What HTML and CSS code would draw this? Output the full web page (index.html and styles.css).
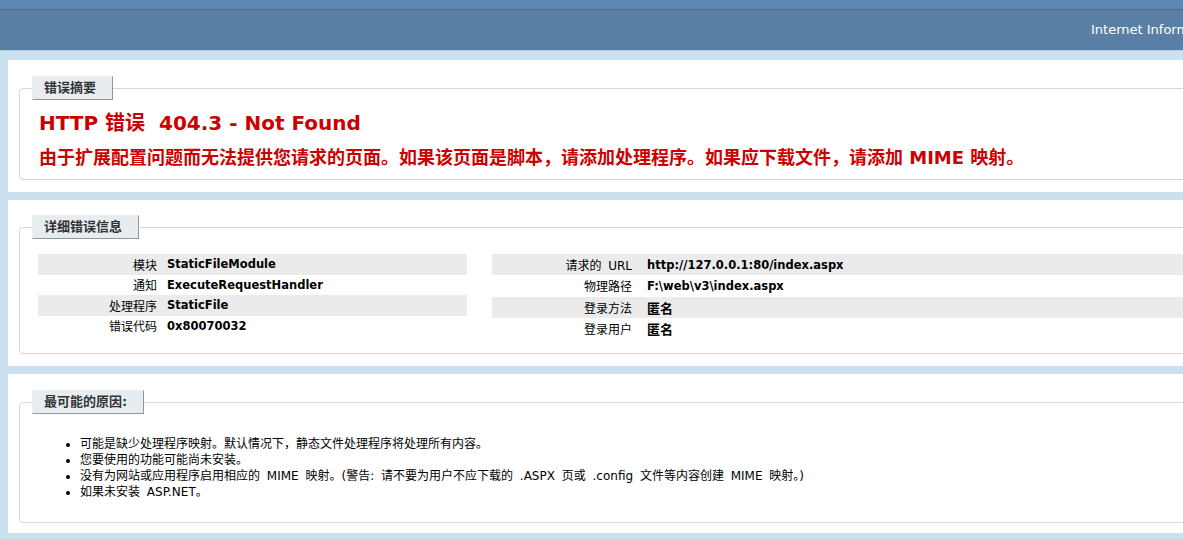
FILE: index.html
```html
<!DOCTYPE html>
<html lang="zh-CN">
<head>
  <meta charset="UTF-8">
  <title>IIS 7.5 详细错误 - 404.3 - Not Found</title>
  <link rel="stylesheet" href="styles.css">
</head>
<body>
  <div class="header"></div>
  <div class="server-version">
    <p>Internet Information Services 7.5</p>
  </div>

  <div class="panel summary">
    <div class="box">
      <div class="legend">错误摘要</div>
      <h1>HTTP 错误&nbsp; 404.3 - Not Found</h1>
      <h2>由于扩展配置问题而无法提供您请求的页面。如果该页面是脚本，请添加处理程序。如果应下载文件，请添加 MIME 映射。</h2>
    </div>
  </div>

  <div class="panel details-panel">
    <div class="box">
      <div class="legend">详细错误信息</div>
      <div class="details">
        <div class="details-left">
          <div class="row alt"><span class="label">模块</span><span class="value">StaticFileModule</span></div>
          <div class="row"><span class="label">通知</span><span class="value">ExecuteRequestHandler</span></div>
          <div class="row alt"><span class="label">处理程序</span><span class="value">StaticFile</span></div>
          <div class="row"><span class="label">错误代码</span><span class="value">0x80070032</span></div>
        </div>
        <div class="details-right">
          <div class="row alt"><span class="label">请求的 URL</span><span class="value">http://127.0.0.1:80/index.aspx</span></div>
          <div class="row"><span class="label">物理路径</span><span class="value">F:\web\v3\index.aspx</span></div>
          <div class="row alt"><span class="label">登录方法</span><span class="value cjk">匿名</span></div>
          <div class="row"><span class="label">登录用户</span><span class="value cjk">匿名</span></div>
        </div>
      </div>
    </div>
  </div>

  <div class="panel causes-panel">
    <div class="box">
      <div class="legend">最可能的原因:</div>
      <ul class="causes">
        <li>可能是缺少处理程序映射。默认情况下，静态文件处理程序将处理所有内容。</li>
        <li>您要使用的功能可能尚未安装。</li>
        <li>没有为网站或应用程序启用相应的 MIME 映射。(警告: 请不要为用户不应下载的 .ASPX 页或 .config 文件等内容创建 MIME 映射。)</li>
        <li>如果未安装 ASP.NET。</li>
      </ul>
    </div>
  </div>
</body>
</html>
```

FILE: styles.css
```css
html, body {
  margin: 0;
  padding: 0;
  overflow: hidden;
}

body {
  background: #cbe1ef;
  font-family: "DejaVu Sans", "Noto Sans CJK SC", sans-serif;
  font-size: 12px;
  color: #000;
}

.header {
  height: 9px;
  background: #5c87b2;
}

.server-version {
  height: 40px;
  padding-left: 1091px;
  background: #5a7fa5;
  border-top: 1px solid #4a6c8e;
  border-bottom: 1px solid #c1cfdd;
  color: #fff;
  font-size: 13px;
  line-height: 17px;
  white-space: nowrap;
}

.server-version p {
  margin: 0;
  padding-top: 11px;
}

.panel {
  width: 1290px;
  margin: 8px 0 0 8px;
  padding: 27px 0 12px 11px;
  background: #fff;
}

.panel.summary {
  margin-top: 9px;
  padding-top: 28px;
}

.panel.causes-panel {
  padding-top: 28px;
  padding-bottom: 10px;
}

.box {
  border: 1px solid #d5d9dd;
  border-radius: 4px;
  padding-bottom: 10px;
}

.details-panel .box {
  padding-bottom: 14px;
}

.causes-panel .box {
  padding-bottom: 22px;
}

.legend {
  width: max-content;
  margin: -13px 0 0 12px;
  padding: 3px 16px 3px 11px;
  background: #e7ecf0;
  border: 1px solid #ededed;
  border-right-color: #969696;
  border-bottom-color: #969696;
  color: #333;
  font-size: 13px;
  font-weight: bold;
  line-height: 16px;
}

h1 {
  margin: 11px 0 0 19px;
  color: #cc0000;
  font-size: 20px;
  line-height: 24px;
}

h2 {
  margin: 12px 0 0 19px;
  color: #cc0000;
  font-size: 18px;
  line-height: 22px;
  white-space: nowrap;
}

.details {
  display: flex;
  margin: 15px 0 0 18px;
}

.details-left {
  width: 429px;
}

.details-right {
  width: 772px;
  margin-left: 25px;
}

.row {
  display: flex;
  align-items: center;
  height: 20.5px;
}

.details-right .row {
  height: 21.3px;
}

.row.alt {
  background: #ebebeb;
}

.row .label {
  width: 119px;
  padding-right: 10px;
  text-align: right;
  word-spacing: 3px;
}

.details-right .row .label {
  width: 140px;
  padding-right: 15px;
}

.row .value {
  font-size: 11.5px;
  font-weight: bold;
}

.row .value.cjk {
  font-size: 13px;
}

.causes {
  margin: 22px 0 0 0;
  padding-left: 60px;
}

.causes li {
  line-height: 16px;
  white-space: nowrap;
  word-spacing: 3px;
}
```
